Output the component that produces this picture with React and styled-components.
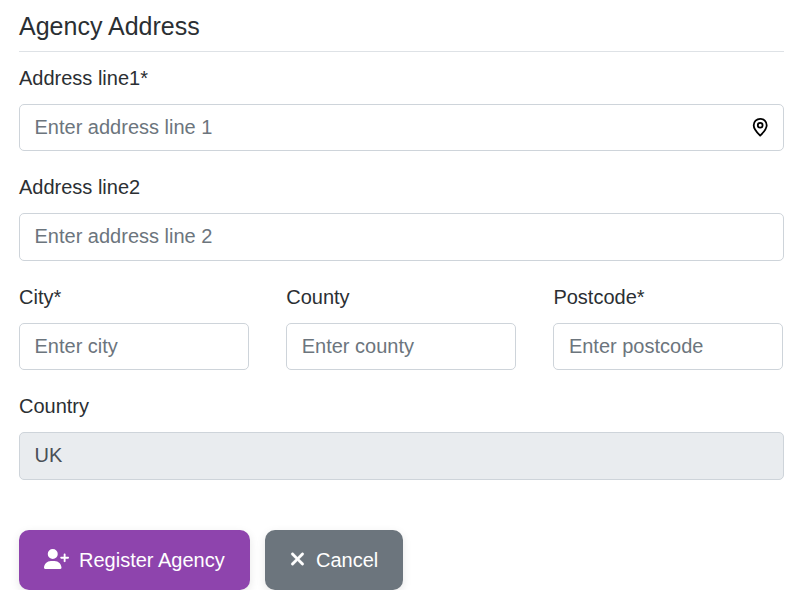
import React from "react";
import styled, { createGlobalStyle } from "styled-components";
import { FaUserPlus, FaXmark } from "react-icons/fa6";

const GlobalStyle = createGlobalStyle`
  *, *::before, *::after { box-sizing: border-box; }
  body {
    margin: 0;
    overflow: hidden;
    background: #fff;
    color: #2b2f33;
    font: 20px/30px "Liberation Sans", Arial, sans-serif;
  }
`;

const Form = styled.form`
  width: 765px;
  margin-left: 19px;
`;

const Title = styled.h2`
  height: 52px;
  margin: 0 0 11px;
  padding-top: 11px;
  border-bottom: 1px solid #dee2e6;
  font-size: 25px;
  font-weight: 400;
  line-height: 30px;
`;

const Field = styled.div`
  display: flex;
  flex-direction: column;
  height: ${(p) => p.$pitch}px;
`;

const Label = styled.label`
  height: 41px;
  line-height: 30px;
`;

const Control = styled.div`
  display: flex;
  align-items: flex-start;
  height: ${(p) => (p.$tall ? 48 : 47)}px;
  padding: 7px 15px 0 14.5px;
  border: 1px solid #ced4da;
  border-radius: 5px;
  background: ${(p) => (p.$disabled ? "#e9ecef" : "#fff")};
  color: #000;
`;

const Input = styled.input`
  flex: 1;
  min-width: 0;
  height: 30px;
  margin: 0;
  padding: 0;
  border: 0;
  outline: 0;
  background: transparent;
  color: #495057;
  font: inherit;
  opacity: 1;

  &::placeholder {
    color: #6c757d;
    opacity: 1;
  }
`;

const Pin = styled.svg`
  width: 16px;
  height: 20px;
  margin-top: 5px;
  fill: none;
  stroke: currentColor;
  stroke-width: 1.8;
  stroke-linejoin: round;
`;

const Columns = styled.div`
  display: grid;
  grid-template-columns: repeat(3, 230px);
  column-gap: 37.2px;
`;

const Actions = styled.div`
  display: flex;
  gap: 15px;
  padding-top: 30px;
`;

const Button = styled.button`
  display: flex;
  align-items: center;
  gap: ${(p) => p.$gap}px;
  width: ${(p) => p.$width}px;
  height: 60px;
  padding: 0 0 0 25px;
  border: 0;
  border-radius: 10px;
  background: ${(p) => p.$color};
  box-shadow: 0 3px 10px rgba(0, 0, 0, 0.1);
  color: #fff;
  font: inherit;
  white-space: nowrap;
`;

const UserIcon = styled(FaUserPlus)`
  flex: none;
  width: 25px;
  height: 20px;
  margin-top: -2px;
`;

const CrossIcon = styled(FaXmark)`
  flex: none;
  width: 15px;
  height: 20px;
  margin-top: -2px;
  stroke: currentColor;
  stroke-width: 12px;
`;

function LocationIcon() {
  return (
    <Pin viewBox="0 0 16 20">
      <path d="M8.2 18.6C6 16.4 1.7 12.7 1.7 8.3a6.5 6.5 0 0 1 13 0C14.7 12.7 10.4 16.4 8.2 18.6Z" />
      <circle cx="8.2" cy="8.2" r="2.4" />
    </Pin>
  );
}

function TextField({ id, label, icon, disabled, tall, pitch = 109, ...rest }) {
  return (
    <Field $pitch={pitch}>
      <Label htmlFor={id}>{label}</Label>
      <Control $disabled={disabled} $tall={tall}>
        <Input id={id} disabled={disabled} {...rest} />
        {icon}
      </Control>
    </Field>
  );
}

export default function App() {
  return (
    <>
      <GlobalStyle />
      <Form>
        <Title>Agency Address</Title>
        <TextField
          id="line1"
          label="Address line1*"
          placeholder="Enter address line 1"
          icon={<LocationIcon />}
        />
        <TextField
          id="line2"
          label="Address line2"
          placeholder="Enter address line 2"
          pitch={110}
          tall
        />
        <Columns>
          <TextField id="city" label="City*" placeholder="Enter city" />
          <TextField id="county" label="County" placeholder="Enter county" />
          <TextField id="postcode" label="Postcode*" placeholder="Enter postcode" />
        </Columns>
        <TextField id="country" label="Country" defaultValue="UK" disabled tall />
        <Actions>
          <Button type="button" $color="#8e44ad" $width={231} $gap={10}>
            <UserIcon />
            Register Agency
          </Button>
          <Button type="button" $color="#6c757d" $width={138} $gap={11}>
            <CrossIcon />
            Cancel
          </Button>
        </Actions>
      </Form>
    </>
  );
}
